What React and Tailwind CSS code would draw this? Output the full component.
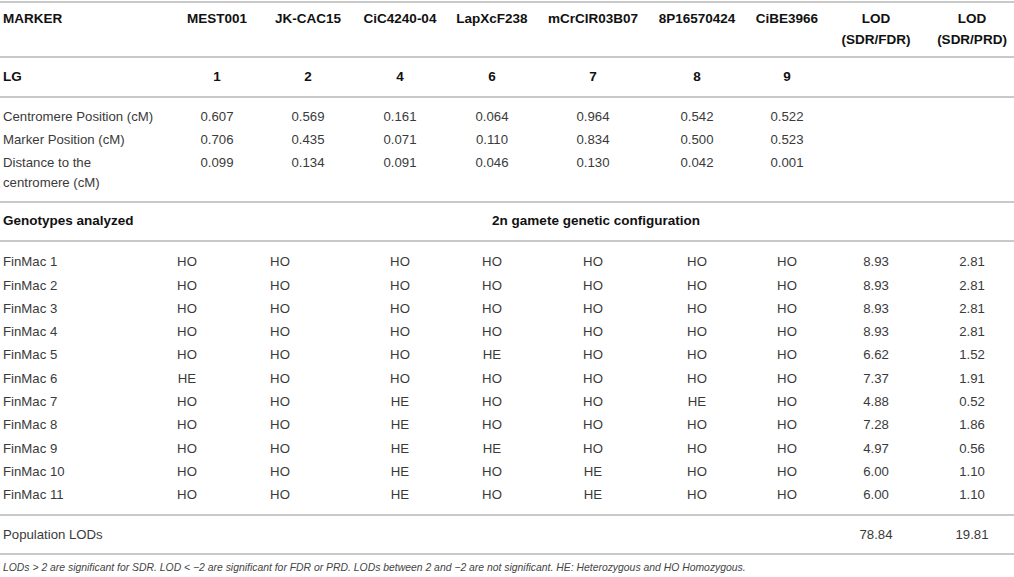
const markers = [
  { name: 'MEST001', lg: '1', cp: '0.607', mp: '0.706', dist: '0.099' },
  { name: 'JK-CAC15', lg: '2', cp: '0.569', mp: '0.435', dist: '0.134' },
  { name: 'CiC4240-04', lg: '4', cp: '0.161', mp: '0.071', dist: '0.091' },
  { name: 'LapXcF238', lg: '6', cp: '0.064', mp: '0.110', dist: '0.046' },
  { name: 'mCrCIR03B07', lg: '7', cp: '0.964', mp: '0.834', dist: '0.130' },
  { name: '8P16570424', lg: '8', cp: '0.542', mp: '0.500', dist: '0.042' },
  { name: 'CiBE3966', lg: '9', cp: '0.522', mp: '0.523', dist: '0.001' },
];

const genotypes = [
  ['FinMac 1', 'HO', 'HO', 'HO', 'HO', 'HO', 'HO', 'HO', '8.93', '2.81'],
  ['FinMac 2', 'HO', 'HO', 'HO', 'HO', 'HO', 'HO', 'HO', '8.93', '2.81'],
  ['FinMac 3', 'HO', 'HO', 'HO', 'HO', 'HO', 'HO', 'HO', '8.93', '2.81'],
  ['FinMac 4', 'HO', 'HO', 'HO', 'HO', 'HO', 'HO', 'HO', '8.93', '2.81'],
  ['FinMac 5', 'HO', 'HO', 'HO', 'HE', 'HO', 'HO', 'HO', '6.62', '1.52'],
  ['FinMac 6', 'HE', 'HO', 'HO', 'HO', 'HO', 'HO', 'HO', '7.37', '1.91'],
  ['FinMac 7', 'HO', 'HO', 'HE', 'HO', 'HO', 'HE', 'HO', '4.88', '0.52'],
  ['FinMac 8', 'HO', 'HO', 'HE', 'HO', 'HO', 'HO', 'HO', '7.28', '1.86'],
  ['FinMac 9', 'HO', 'HO', 'HE', 'HE', 'HO', 'HO', 'HO', '4.97', '0.56'],
  ['FinMac 10', 'HO', 'HO', 'HE', 'HO', 'HE', 'HO', 'HO', '6.00', '1.10'],
  ['FinMac 11', 'HO', 'HO', 'HE', 'HO', 'HE', 'HO', 'HO', '6.00', '1.10'],
];

const grid = 'grid grid-cols-[172px_90px_92px_92px_92px_110px_98px_82px_98px_88px]';
const rule = 'h-[2px] bg-[#c9c9c9]';

// offsets for the genotype columns, which sit left of the header in the first two columns
const genoCell = [
  'pl-[3px] text-left',
  'text-center pr-[60px]',
  'text-center pr-[56px]',
  'text-center',
  'text-center',
  'text-center',
  'text-center',
  'text-center',
  'text-center pr-[2px]',
  'text-center pl-[4px]',
];

function DataRow({ label, values, wrap }) {
  return (
    <div className={`${grid} py-[1.5px] leading-[20px]`}>
      <div className={`pl-[3px] ${wrap ? 'pr-[40px]' : ''}`}>{label}</div>
      {values.map((v, i) => (
        <div key={i} className="text-center">{v}</div>
      ))}
      <div />
      <div />
    </div>
  );
}

export default function App() {
  return (
    <div
      className="w-[1014px] h-[577px] bg-white text-[13.2px] text-[#3a3a3a] overflow-hidden"
      style={{ fontFamily: '"Liberation Sans", Arial, sans-serif' }}
    >
      <div className="h-[1px]" />
      <div className={rule} />

      {/* Header */}
      <div className={`${grid} pt-[5px] pb-[6px] leading-[21px] text-[13.5px] font-bold text-[#111]`}>
        <div className="pl-[3px]">MARKER</div>
        {markers.map((m) => (
          <div key={m.name} className="text-center whitespace-nowrap">{m.name}</div>
        ))}
        <div className="text-center pr-[2px]">LOD<br />(SDR/FDR)</div>
        <div className="text-center pl-[4px]">LOD<br />(SDR/PRD)</div>
      </div>
      <div className={rule} />

      {/* LG */}
      <div className={`${grid} h-[38px] items-center text-[13.5px] font-bold text-[#111]`}>
        <div className="pl-[3px]">LG</div>
        {markers.map((m) => (
          <div key={m.name} className="text-center">{m.lg}</div>
        ))}
        <div />
        <div />
      </div>
      <div className={rule} />

      {/* Positions */}
      <div className="pt-[7.5px] pb-[6.5px]">
        <DataRow label="Centromere Position (cM)" values={markers.map((m) => m.cp)} />
        <DataRow label="Marker Position (cM)" values={markers.map((m) => m.mp)} />
        <DataRow label="Distance to the centromere (cM)" values={markers.map((m) => m.dist)} wrap />
      </div>
      <div className={rule} />

      {/* Genotypes heading */}
      <div className={`${grid} h-[37px] items-center text-[13.5px] font-bold text-[#111]`}>
        <div className="pl-[3px] col-span-3 whitespace-nowrap">Genotypes analyzed</div>
        <div className="col-start-5 col-span-3 text-center whitespace-nowrap">
          2n gamete genetic configuration
        </div>
      </div>
      <div className={rule} />

      {/* Genotypes */}
      <div className="pt-[8.3px] pb-[7.5px]">
        {genotypes.map((row) => (
          <div key={row[0]} className={`${grid} h-[23.3px] leading-[23.3px]`}>
            {row.map((v, i) => (
              <div key={i} className={genoCell[i]}>{v}</div>
            ))}
          </div>
        ))}
      </div>
      <div className={rule} />

      {/* Population */}
      <div className={`${grid} h-[37px] items-center`}>
        <div className="pl-[3px] col-span-3">Population LODs</div>
        <div className="col-start-9 text-center pr-[2px]">78.84</div>
        <div className="text-center pl-[4px]">19.81</div>
      </div>
      <div className={rule} />

      <p className="pl-[3px] pt-[5px] text-[10.4px] leading-[16px] italic text-[#444]">
        LODs &gt; 2 are significant for SDR. LOD &lt; −2 are significant for FDR or PRD. LODs between 2 and −2 are not significant. HE: Heterozygous and HO Homozygous.
      </p>
    </div>
  );
}
